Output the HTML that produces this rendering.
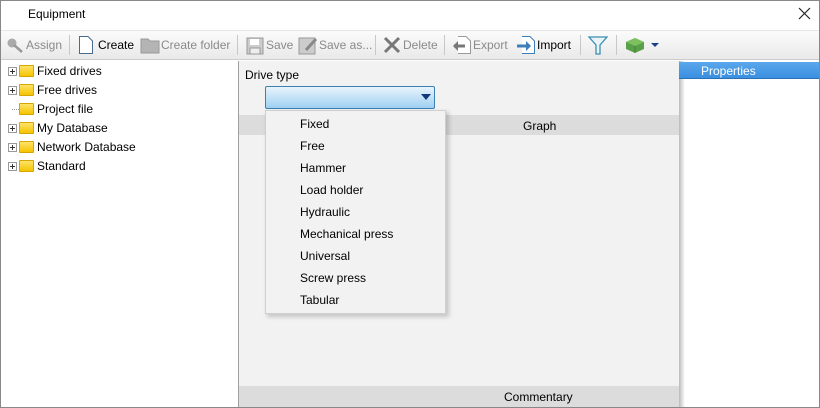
<!DOCTYPE html>
<html><head><style>
*{margin:0;padding:0;box-sizing:border-box}
body{width:820px;height:408px;overflow:hidden;font-family:"Liberation Sans",sans-serif;font-size:12px;color:#000;background:#fff;position:relative}
.abs{position:absolute}
#win{left:0;top:0;width:820px;height:408px;border:1px solid #888}
#tb{left:1px;top:30px;width:818px;height:30px;background:linear-gradient(#fbfbfb,#e9e9e9);border-top:1px solid #e6e6e6;border-bottom:1px solid #ccc}
.t{position:absolute;top:38px;font-size:12px;color:#8a8a8a}
.b{color:#000}
.sep{position:absolute;top:35px;width:1px;height:20px;background:#c8c8c8}
.tree div{position:absolute;left:8px;height:19px;font-size:12px}
.pl{position:absolute;left:0;top:5px;width:9px;height:9px;border:1px solid #999;background:#fff}
.pl:before{content:"";position:absolute;left:1px;top:3px;width:5px;height:1px;background:#333}
.pl:after{content:"";position:absolute;left:3px;top:1px;width:1px;height:5px;background:#333}
.fd{position:absolute;left:11px;top:3px;width:15px;height:12px;background:linear-gradient(#ffe36a,#f5c400);border:1px solid #d3a600;border-radius:1px}
.tree span{position:absolute;left:29px;top:2px;white-space:nowrap}
.menu div{position:absolute;left:34px;font-size:12px}
</style></head><body>
<div id="win" class="abs"></div>
<div class="abs" style="left:28px;top:7px;font-size:12px">Equipment</div>
<svg class="abs" style="left:798px;top:7px" width="13" height="13"><path d="M1 1L12 12M12 1L1 12" stroke="#222" stroke-width="1.2"/></svg>
<div id="tb" class="abs"></div>
<svg class="abs" style="left:5px;top:36px" width="20" height="18"><circle cx="7" cy="7" r="4.5" fill="#aaa"/><path d="M9 9L17 16" stroke="#999" stroke-width="2.5"/></svg>
<div class="t" style="left:26px">Assign</div>
<div class="sep" style="left:69px"></div>
<svg class="abs" style="left:78px;top:35px" width="16" height="20"><path d="M1.5 1.5H10L14.5 6V18.5H1.5Z" fill="#fff" stroke="#4a6c8c"/></svg>
<div class="t b" style="left:98px">Create</div>
<svg class="abs" style="left:140px;top:37px" width="20" height="17"><path d="M1 2H8L10 4H19V16H1Z" fill="#b4b4b4" stroke="#999"/></svg>
<div class="t" style="left:161px">Create folder</div>
<div class="sep" style="left:237px"></div>
<svg class="abs" style="left:246px;top:37px" width="18" height="18"><rect x="1" y="1" width="16" height="16" fill="#ccc" stroke="#999"/><rect x="4" y="2" width="9" height="6" fill="#fff"/><rect x="4" y="11" width="10" height="6" fill="#eee" stroke="#999"/></svg>
<div class="t" style="left:266px">Save</div>
<svg class="abs" style="left:298px;top:36px" width="20" height="19"><rect x="1" y="2" width="16" height="16" fill="#ccc" stroke="#999"/><path d="M8 14L18 3" stroke="#888" stroke-width="3"/></svg>
<div class="t" style="left:319px">Save as...</div>
<div class="sep" style="left:375px"></div>
<svg class="abs" style="left:383px;top:36px" width="18" height="18"><path d="M2 2L16 16M16 2L2 16" stroke="#777" stroke-width="3"/></svg>
<div class="t" style="left:403px">Delete</div>
<div class="sep" style="left:444px"></div>
<svg class="abs" style="left:452px;top:35px" width="20" height="20"><path d="M6 1.5H14L18.5 6V18.5H6" fill="#fff" stroke="#999"/><path d="M2 11H13" stroke="#777" stroke-width="3"/><path d="M1 11L6 6V16Z" fill="#777"/></svg>
<div class="t" style="left:473px">Export</div>
<svg class="abs" style="left:516px;top:35px" width="20" height="20"><path d="M6 1.5H14L18.5 6V18.5H6" fill="#fff" stroke="#3d7fb8"/><path d="M1 11H11" stroke="#3d7fb8" stroke-width="3"/><path d="M15 11L10 6V16Z" fill="#3d7fb8"/></svg>
<div class="t b" style="left:537px">Import</div>
<div class="sep" style="left:580px"></div>
<svg class="abs" style="left:588px;top:35px" width="20" height="20"><path d="M1 2H19L12 10V19H8V10Z" fill="#eaf4f8" stroke="#3c8fb0" stroke-width="1.3"/></svg>
<div class="sep" style="left:616px"></div>
<svg class="abs" style="left:625px;top:35px" width="36" height="20"><path d="M1 7L10 3L19 7V14L10 18L1 14Z" fill="#5aa04a"/><path d="M1 7L10 11L19 7L10 3Z" fill="#7cc060"/><path d="M10 11V18" stroke="#3f7f35"/><path d="M26 8H34L30 12Z" fill="#1a3e8c"/></svg>
<div class="abs" style="left:238px;top:61px;width:1px;height:346px;background:#a0a0a0"></div>
<div class="tree">
<div style="top:62px"><i class="pl"></i><i class="fd"></i><span>Fixed drives</span></div>
<div style="top:81px"><i class="pl"></i><i class="fd"></i><span>Free drives</span></div>
<div style="top:100px"><i style="position:absolute;left:4px;top:9px;width:7px;border-top:1px dotted #999"></i><i class="fd"></i><span>Project file</span></div>
<div style="top:119px"><i class="pl"></i><i class="fd"></i><span>My Database</span></div>
<div style="top:138px"><i class="pl"></i><i class="fd"></i><span>Network Database</span></div>
<div style="top:157px"><i class="pl"></i><i class="fd"></i><span>Standard</span></div>
</div>
<div class="abs" style="left:239px;top:61px;width:440px;height:346px;background:#f2f2f2"></div>
<div class="abs" style="left:245px;top:68px">Drive type</div>
<div class="abs" style="left:239px;top:115px;width:440px;height:20px;background:#dcdcdc"></div>
<div class="abs" style="left:523px;top:119px">Graph</div>
<div class="abs" style="left:239px;top:386px;width:440px;height:21px;background:#dcdcdc"></div>
<div class="abs" style="left:504px;top:390px">Commentary</div>
<div class="abs" style="left:679px;top:61px;width:6px;height:346px;background:linear-gradient(90deg,#bbb,#fff)"></div>
<div class="abs" style="left:679px;top:62px;width:140px;height:17px;background:linear-gradient(#5aa8ec,#3a8fe0);border-bottom:1px solid #2b6fb5"></div>
<div class="abs" style="left:701px;top:64px;color:#fff">Properties</div>
<div class="abs" style="left:265px;top:86px;width:170px;height:23px;border:1px solid #3c7fb1;border-radius:2px;background:linear-gradient(#e8f4fc,#9fd0f2)"></div>
<svg class="abs" style="left:421px;top:94px" width="10" height="6"><path d="M0 0H10L5 6Z" fill="#123a7a"/></svg>
<div class="abs" style="left:267px;top:112px;width:182px;height:205px;background:rgba(0,0,0,0.18);filter:blur(2px)"></div>
<div class="abs menu" style="left:265px;top:110px;width:181px;height:204px;background:#f2f2f2;border:1px solid #cfcfcf">
<div style="top:6px">Fixed</div>
<div style="top:28px">Free</div>
<div style="top:50px">Hammer</div>
<div style="top:72px">Load holder</div>
<div style="top:94px">Hydraulic</div>
<div style="top:116px">Mechanical press</div>
<div style="top:138px">Universal</div>
<div style="top:160px">Screw press</div>
<div style="top:182px">Tabular</div>
</div>
</body></html>
